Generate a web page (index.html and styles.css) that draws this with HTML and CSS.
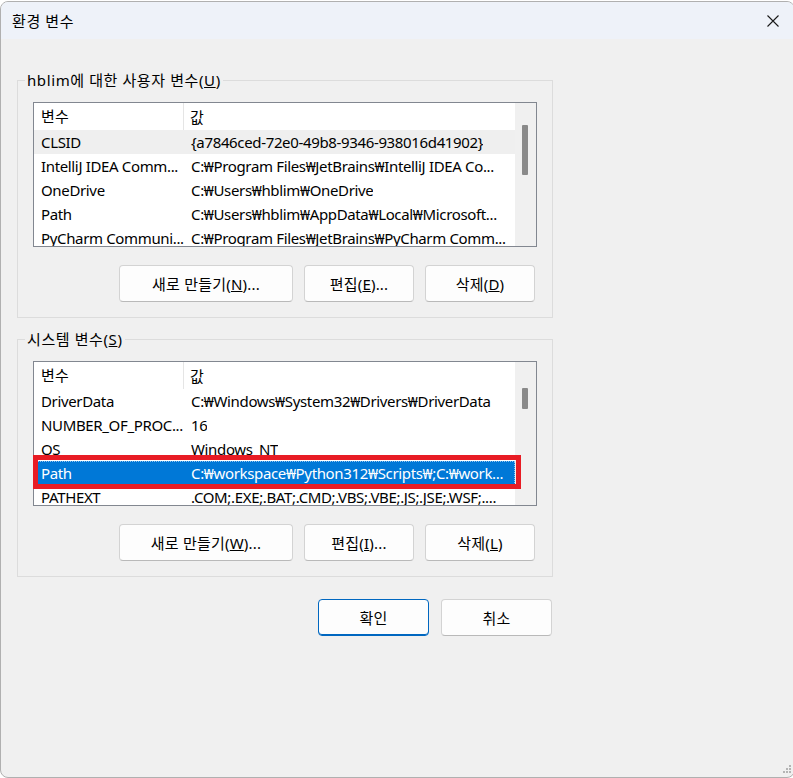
FILE: index.html
```html
<!DOCTYPE html>
<html lang="ko">
<head>
<meta charset="utf-8">
<title>환경 변수</title>
<link rel="stylesheet" href="styles.css">
</head>
<body>
<div class="window">
  <div class="titlebar">
    <span class="title">환경 변수</span>
    <svg class="close" width="12" height="12" viewBox="0 0 12 12"><path d="M0.5 0.5 L11.5 11.5 M11.5 0.5 L0.5 11.5" stroke="#1a1a1a" stroke-width="1.1" fill="none"/></svg>
  </div>
  <div class="content">
    <fieldset class="group">
      <legend>hblim에 대한 사용자 변수(<u>U</u>)</legend>
      <div class="list">
        <div class="table">
          <div class="row head"><span class="c1">변수</span><span class="c2">값</span></div>
          <div class="row hover"><span class="c1">CLSID</span><span class="c2">{a7846ced-72e0-49b8-9346-938016d41902}</span></div>
          <div class="row"><span class="c1">IntelliJ IDEA Comm...</span><span class="c2">C:₩Program Files₩JetBrains₩IntelliJ IDEA Co...</span></div>
          <div class="row"><span class="c1">OneDrive</span><span class="c2">C:₩Users₩hblim₩OneDrive</span></div>
          <div class="row"><span class="c1">Path</span><span class="c2">C:₩Users₩hblim₩AppData₩Local₩Microsoft...</span></div>
          <div class="row"><span class="c1">PyCharm Communi...</span><span class="c2">C:₩Program Files₩JetBrains₩PyCharm Comm...</span></div>
        </div>
        <div class="scroll"><div class="thumb thumb-user"></div></div>
      </div>
      <div class="buttons">
        <button class="btn wide">새로 만들기(<u>N</u>)...</button>
        <button class="btn">편집(<u>E</u>)...</button>
        <button class="btn">삭제(<u>D</u>)</button>
      </div>
    </fieldset>

    <fieldset class="group second">
      <legend>시스템 변수(<u>S</u>)</legend>
      <div class="list">
        <div class="table">
          <div class="row head"><span class="c1">변수</span><span class="c2">값</span></div>
          <div class="row"><span class="c1">DriverData</span><span class="c2">C:₩Windows₩System32₩Drivers₩DriverData</span></div>
          <div class="row"><span class="c1">NUMBER_OF_PROC...</span><span class="c2">16</span></div>
          <div class="row"><span class="c1">OS</span><span class="c2">Windows_NT</span></div>
          <div class="row selected"><span class="c1">Path</span><span class="c2">C:₩workspace₩Python312₩Scripts₩;C:₩work...</span></div>
          <div class="row"><span class="c1">PATHEXT</span><span class="c2">.COM;.EXE;.BAT;.CMD;.VBS;.VBE;.JS;.JSE;.WSF;....</span></div>
        </div>
        <div class="scroll"><div class="thumb thumb-sys"></div></div>
        <div class="highlight"></div>
      </div>
      <div class="buttons">
        <button class="btn wide">새로 만들기(<u>W</u>)...</button>
        <button class="btn">편집(<u>I</u>)...</button>
        <button class="btn">삭제(<u>L</u>)</button>
      </div>
    </fieldset>

    <div class="dialog-buttons">
      <button class="btn dlg primary">확인</button>
      <button class="btn dlg">취소</button>
    </div>
  </div>
  <svg class="grip" width="11" height="11" viewBox="0 0 11 11">
    <rect x="8" y="0" width="2" height="2" fill="#b4b4b4"/>
    <rect x="5" y="3" width="2" height="2" fill="#b4b4b4"/>
    <rect x="8" y="3" width="2" height="2" fill="#b4b4b4"/>
    <rect x="2" y="6" width="2" height="2" fill="#b4b4b4"/>
    <rect x="5" y="6" width="2" height="2" fill="#b4b4b4"/>
    <rect x="8" y="6" width="2" height="2" fill="#b4b4b4"/>
  </svg>
</div>
</body>
</html>
```
FILE: styles.css
```css
* { box-sizing: border-box; }
html, body {
  margin: 0;
  padding: 0;
  background: #ffffff;
  overflow: hidden;
}
body {
  width: 793px;
  height: 778px;
  font-family: "Noto Sans", "Noto Sans CJK KR", sans-serif;
  font-size: 15px;
  color: #000;
}
.window {
  position: relative;
  margin-top: 1px;
  width: 795px;
  height: 777px;
  border: 1px solid #b0b0b0;
  border-radius: 8px;
  background: #f0f0f0;
  overflow: hidden;
}
.titlebar {
  height: 37px;
  background: #eef2f9;
  display: flex;
  align-items: center;
  justify-content: space-between;
  padding: 0 15px 0 11px;
}
.title {
  font-size: 15px;
  line-height: 20px;
  letter-spacing: 0.6px;
}
.close { display: block; }
.content {
  padding: 0 16px;
}
.group {
  margin: 31px 0 0 0;
  width: 536px;
  border: 1px solid #dcdcdc;
  padding: 12px 15px 15px 15px;
  min-width: 0;
}
.group.second {
  margin-top: 11px;
}
.group legend {
  padding: 0 2px;
  margin-left: -8px;
  line-height: 20px;
  white-space: nowrap;
  letter-spacing: 0.6px;
}
.list {
  position: relative;
  width: 504px;
  height: 145px;
  border: 1px solid #828790;
  background: #fff;
  display: flex;
  overflow: visible;
}
.table {
  width: 481px;
  height: 143px;
  overflow: hidden;
}
.row {
  display: flex;
  height: 24px;
  align-items: center;
  white-space: nowrap;
  line-height: 20px;
  letter-spacing: -0.35px;
}
.row.head {
  height: 27px;
  letter-spacing: 0.3px;
}
.row.hover {
  background: #efefef;
}
.row.selected {
  background: #0078d7;
  color: #fff;
  outline: 1px dotted #8fc3ee;
  outline-offset: -1px;
}
.c1 {
  width: 150px;
  flex: none;
  padding-left: 7px;
  overflow: hidden;
}
.c2 {
  padding-left: 7px;
  overflow: hidden;
}
.head .c1 {
  height: 27px;
  line-height: 27px;
  border-right: 1px solid #e5e5e5;
}
.head .c2 {
  padding-left: 6px;
}
.scroll {
  position: relative;
  width: 21px;
  height: 143px;
  background: #f0f0f0;
}
.thumb {
  position: absolute;
  left: 7px;
  width: 6px;
  background: #8a8a8a;
  border-radius: 1px;
}
.thumb-user { top: 22px; height: 50px; }
.thumb-sys { top: 26px; height: 21px; }
.highlight {
  position: absolute;
  left: -1px;
  top: 93px;
  width: 488px;
  height: 34px;
  border: 5px solid #e81c24;
}
.buttons {
  display: flex;
  justify-content: flex-end;
  gap: 11px;
  margin-top: 18px;
  padding-right: 2px;
}
.btn {
  height: 37px;
  width: 110px;
  background: #fdfdfd;
  border: 1px solid #d3d3d3;
  border-bottom-color: #b9b9b9;
  border-radius: 4px;
  font-family: inherit;
  font-size: 15px;
  color: #000;
  padding: 0;
  line-height: 20px;
  letter-spacing: 0.2px;
}
.btn.wide { width: 174px; }
.dialog-buttons {
  width: 536px;
  display: flex;
  justify-content: flex-end;
  gap: 12px;
  margin-top: 22px;
  padding-right: 1px;
}
.btn.dlg { width: 111px; }
.btn.primary {
  border: 1px solid #0067c0;
  box-shadow: inset 0 -1px 0 #0067c0;
}
.grip {
  position: absolute;
  right: 2px;
  bottom: 1px;
}
```
